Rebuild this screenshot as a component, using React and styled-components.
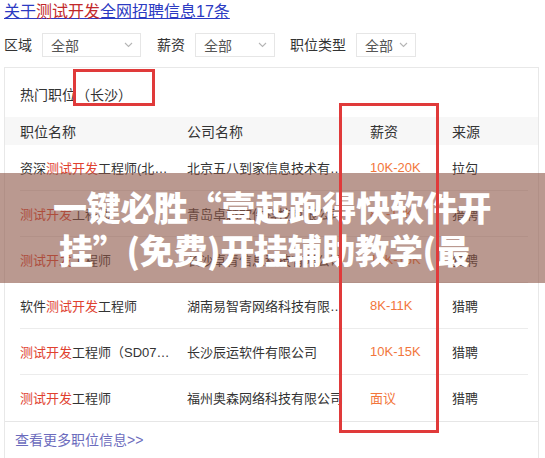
import React from 'react'
import styled, { createGlobalStyle } from 'styled-components'

const GlobalStyle = createGlobalStyle`
  html, body {
    margin: 0;
    padding: 0;
    background: #fff;
  }
  body {
    font-family: "Liberation Sans", Arial, "Noto Sans CJK SC", sans-serif;
    color: #333;
  }
`

const Page = styled.div`
  position: relative;
  width: 545px;
  height: 458px;
  overflow: hidden;
  padding: 0 4px;
  box-sizing: border-box;
`

const Title = styled.a`
  display: block;
  height: 26px;
  padding-top: 2px;
  box-sizing: border-box;
  font-size: 16px;
  line-height: 20px;
  color: #2b3ac2;
  text-decoration: underline;
  white-space: nowrap;
`

const Hl = styled.span`
  color: ${p => p.$c || '#c2282a'};
`

const Filters = styled.div`
  display: flex;
  align-items: center;
  height: 24px;
  margin-top: 7px;
`

const Label = styled.span`
  font-size: 14px;
  line-height: 24px;
  margin-left: ${p => p.$ml || 0}px;
  margin-right: 10px;
  white-space: nowrap;
`

const Select = styled.div`
  display: flex;
  align-items: center;
  justify-content: space-between;
  width: ${p => p.$w}px;
  height: 24px;
  box-sizing: border-box;
  border: 1px solid #e6e6e6;
  padding: 0 7px 0 8px;
  font-size: 14px;
  color: #555;
`

const Chevron = () => (
  <svg width="9" height="6" viewBox="0 0 9 6">
    <path d="M1 1l3.5 3.5L8 1" fill="none" stroke="#b5b5b5" strokeWidth="1.1" />
  </svg>
)

const Card = styled.div`
  margin-top: 10px;
  width: 535px;
  height: 400px;
  box-sizing: border-box;
  border: 1px solid #e8e8e8;
  border-bottom: none;
`

const CardTitle = styled.div`
  height: 49px;
  padding: 17px 0 0 15px;
  box-sizing: border-box;
  font-size: 14px;
  line-height: 20px;
`

const Grid = styled.div`
  display: grid;
  grid-template-columns: 167px 183px 82px 1fr;
  align-items: center;
`

const HeadRow = styled(Grid)`
  height: 28px;
  padding-left: 15px;
  background: #f7f7f7;
  font-size: 14px;
`

const Row = styled(Grid)`
  height: 46px;
  margin: 0 10px 0 15px;
  border-bottom: 1px solid ${p => (p.$last ? 'transparent' : '#ececec')};
  box-sizing: border-box;
  font-size: 13px;
`

const Cell = styled.div`
  white-space: nowrap;
  overflow: hidden;
  text-overflow: ellipsis;
  padding-right: ${p => p.$pr || 0}px;
  color: ${p => p.$c || '#333'};
`

const Footer = styled.div`
  border-top: 1px solid #e6e6e6;
  padding: 8px 0 0 10px;
  font-size: 14px;
  line-height: 20px;
  color: #6c6cbd;
`

const Mark = styled.div`
  position: absolute;
  left: ${p => p.$x}px;
  top: ${p => p.$y}px;
  width: ${p => p.$w}px;
  height: ${p => p.$h}px;
  border: 3px solid #e03a3a;
  box-sizing: border-box;
  z-index: 3;
`

const Banner = styled.div`
  position: absolute;
  left: 0;
  top: 173px;
  width: 545px;
  height: 110px;
  background: rgba(140, 85, 70, 0.6);
  z-index: 2;
  overflow: hidden;
  padding: 12px 0 0 53px;
  box-sizing: border-box;
`

const BannerLine = styled.div`
  font-family: "Noto Sans CJK SC", sans-serif;
  font-weight: 900;
  font-size: 34px;
  line-height: 43px;
  color: #fff;
  letter-spacing: -0.3px;
  white-space: nowrap;
  padding-left: ${p => p.$indent || 0}px;
`

const Red = ({ children }) => <Hl $c="#e0412f">{children}</Hl>

const jobs = [
  { t: <>资深<Red>测试开发</Red>工程师(北京/上海)</>, c: '北京五八到家信息技术有限公司', s: '10K-20K', f: '拉勾' },
  { t: <><Red>测试开发</Red>工程师</>, c: '青岛卓越软件科技有限公司', s: '8K-12K', f: '猎聘' },
  { t: <><Red>测试开发</Red>工程师</>, c: '长沙卓青信息科技有限公司', s: '10K-15K', f: '猎聘' },
  { t: <>软件<Red>测试开发</Red>工程师</>, c: '湖南易智寄网络科技有限公司', s: '8K-11K', f: '猎聘' },
  { t: <><Red>测试开发</Red>工程师（SD0712）</>, c: '长沙辰运软件有限公司', s: '10K-15K', f: '猎聘' },
  { t: <><Red>测试开发</Red>工程师</>, c: '福州奥森网络科技有限公司', s: '面议', f: '猎聘' },
]

export default function App() {
  return (
    <>
      <GlobalStyle />
      <Page>
        <Title>关于<Hl>测试开发</Hl>全网招聘信息17条</Title>
        <Filters>
          <Label>区域</Label>
          <Select $w={99}>全部<Chevron /></Select>
          <Label $ml={16}>薪资</Label>
          <Select $w={80}>全部<Chevron /></Select>
          <Label $ml={15}>职位类型</Label>
          <Select $w={60}>全部<Chevron /></Select>
        </Filters>
        <Card>
          <CardTitle>热门职位（长沙）</CardTitle>
          <HeadRow>
            <Cell>职位名称</Cell>
            <Cell>公司名称</Cell>
            <Cell>薪资</Cell>
            <Cell>来源</Cell>
          </HeadRow>
          {jobs.map((j, i) => (
            <Row key={i} $last={i === jobs.length - 1}>
              <Cell $pr={13}>{j.t}</Cell>
              <Cell $pr={22}>{j.c}</Cell>
              <Cell $c="#f2763c">{j.s}</Cell>
              <Cell>{j.f}</Cell>
            </Row>
          ))}
          <Footer>查看更多职位信息&gt;&gt;</Footer>
        </Card>
        <Mark $x={73} $y={69} $w={82} $h={37} />
        <Mark $x={339} $y={103} $w={100} $h={330} />
        <Banner>
          <BannerLine>一键必胜“壹起跑得快软件开</BannerLine>
          <BannerLine $indent={6}>挂”(免费)开挂辅助教学(最</BannerLine>
        </Banner>
      </Page>
    </>
  )
}
